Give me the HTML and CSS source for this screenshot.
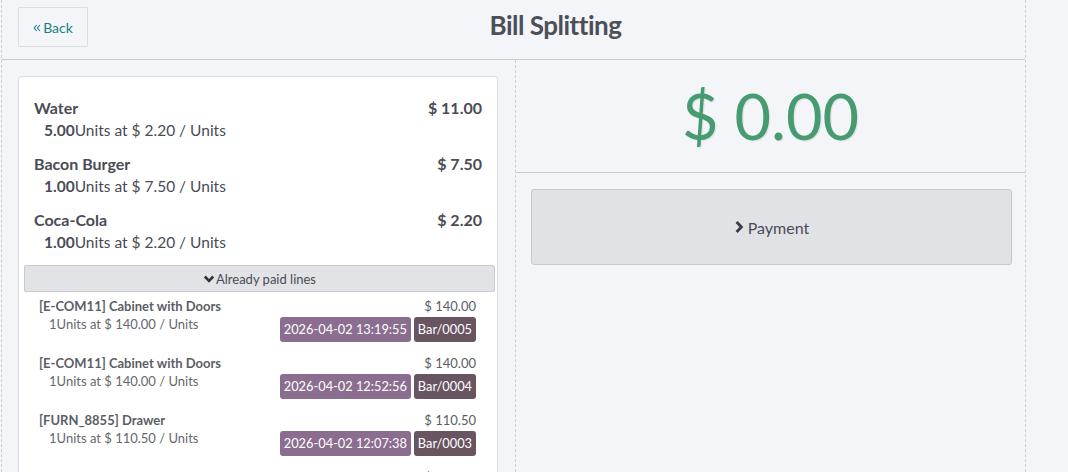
FILE: index.html
```html
<!DOCTYPE html>
<html>
<head>
<meta charset="utf-8">
<link rel="stylesheet" href="styles.css">
</head>
<body>
<div class="screen">
  <header class="topbar">
    <button class="back-btn">
      <svg class="back-icon" viewBox="0 0 10 10" width="8" height="8"><path d="M4.5 1.5 L1.5 5 L4.5 8.5 M8.5 1.5 L5.5 5 L8.5 8.5" fill="none" stroke="currentColor" stroke-width="1.3"/></svg>Back
    </button>
    <h1 class="title">Bill Splitting</h1>
  </header>
  <main class="content">
    <section class="left-col">
      <div class="card">
        <ul class="order-lines">
          <li class="line">
            <div class="line-head"><span>Water</span><span>$ 11.00</span></div>
            <div class="line-info"><b>5.00</b>Units at $ 2.20 / Units</div>
          </li>
          <li class="line">
            <div class="line-head"><span>Bacon Burger</span><span>$ 7.50</span></div>
            <div class="line-info"><b>1.00</b>Units at $ 7.50 / Units</div>
          </li>
          <li class="line">
            <div class="line-head"><span>Coca-Cola</span><span>$ 2.20</span></div>
            <div class="line-info"><b>1.00</b>Units at $ 2.20 / Units</div>
          </li>
        </ul>
        <div class="paid-toggle">
          <svg viewBox="0 0 12 10" width="12" height="10"><path d="M1.8 2.5 L6 6.8 L10.2 2.5" fill="none" stroke="#333" stroke-width="2.6"/></svg>Already paid lines
        </div>
        <ul class="paid-lines">
          <li class="paid">
            <div class="paid-left">
              <div class="paid-name">[E-COM11] Cabinet with Doors</div>
              <div class="paid-info">1Units at $ 140.00 / Units</div>
            </div>
            <div class="paid-right">
              <div class="paid-price">$ 140.00</div>
              <div class="badges"><span class="badge date">2026-04-02 13:19:55</span><span class="badge ref">Bar/0005</span></div>
            </div>
          </li>
          <li class="paid">
            <div class="paid-left">
              <div class="paid-name">[E-COM11] Cabinet with Doors</div>
              <div class="paid-info">1Units at $ 140.00 / Units</div>
            </div>
            <div class="paid-right">
              <div class="paid-price">$ 140.00</div>
              <div class="badges"><span class="badge date">2026-04-02 12:52:56</span><span class="badge ref">Bar/0004</span></div>
            </div>
          </li>
          <li class="paid">
            <div class="paid-left">
              <div class="paid-name">[FURN_8855] Drawer</div>
              <div class="paid-info">1Units at $ 110.50 / Units</div>
            </div>
            <div class="paid-right">
              <div class="paid-price">$ 110.50</div>
              <div class="badges"><span class="badge date">2026-04-02 12:07:38</span><span class="badge ref">Bar/0003</span></div>
            </div>
          </li>
          <li class="paid">
            <div class="paid-left"></div>
            <div class="paid-right">
              <div class="paid-price">$ 110.50</div>
            </div>
          </li>
        </ul>
      </div>
    </section>
    <section class="right-col">
      <div class="amount">$ 0.00</div>
      <div class="actions">
        <button class="pay-btn">
          <svg viewBox="0 0 10 14" width="10" height="14"><path d="M2.6 2 L7.4 7 L2.6 12" fill="none" stroke="#3a3c44" stroke-width="2.8"/></svg>Payment
        </button>
      </div>
    </section>
  </main>
</div>
</body>
</html>
```
FILE: styles.css
```css
* { box-sizing: border-box; }
html, body {
  margin: 0;
  padding: 0;
  height: 472px;
  overflow: hidden;
  background: #f4f5f9;
  font-family: Lato, "Noto Sans", sans-serif;
  color: #4a4a4a;
}
ul { list-style: none; margin: 0; padding: 0; }
.screen {
  margin-left: 1px;
  width: 1025px;
  height: 472px;
  overflow: hidden;
  border-left: 1px dashed #cfd0d4;
  border-right: 1px dashed #cfd0d4;
  display: flex;
  flex-direction: column;
}
.topbar {
  height: 60px;
  flex: none;
  border-bottom: 1px solid #c8c9ce;
  display: flex;
  align-items: flex-start;
  padding: 7px 0 0 16px;
}
.back-btn {
  width: 70px;
  height: 40px;
  border: 1px solid #dcdde2;
  background: #f4f5f9;
  color: #1b7f86;
  font-family: Lato, sans-serif;
  font-size: 14px;
  display: flex;
  align-items: center;
  justify-content: center;
  gap: 2px;
  padding: 0;
  border-radius: 1px;
}
.back-icon { margin-top: 1px; }
.title {
  flex: 1;
  margin: 0;
  text-align: center;
  font-size: 26px;
  font-weight: 700;
  color: #4b4f58;
  line-height: 36px;
  letter-spacing: -0.5px;
  padding-right: 2px;
}
.content {
  flex: 1;
  display: flex;
  min-height: 0;
}
.left-col {
  width: 514px;
  border-right: 1px dashed #cfd0d4;
  padding: 16px 17px 0 16px;
}
.card {
  background: #fff;
  border: 1px solid #dcdde2;
  border-radius: 3px;
  min-height: 420px;
  padding: 19px 2px 0 5px;
}
.order-lines { padding: 0 13px 0 10px; }
.line { margin-bottom: 10px; }
.line-head {
  display: flex;
  justify-content: space-between;
  font-size: 16px;
  font-weight: 700;
  line-height: 23px;
  color: #4a4c55;
}
.line-info {
  padding-left: 10px;
  font-size: 15.5px;
  line-height: 23px;
  color: #4a4c55;
}
.line-info b { font-weight: 700; }
.paid-toggle {
  margin-top: 11px;
  height: 27px;
  background: #e2e3e7;
  border: 1px solid #c9cace;
  border-radius: 2px;
  display: flex;
  align-items: center;
  justify-content: center;
  font-size: 13px;
  color: #4a4c55;
  gap: 1px;
}
.paid-lines { padding: 5px 19px 0 15px; }
.paid {
  display: flex;
  justify-content: space-between;
  margin-bottom: 12px;
}
.paid-name {
  font-size: 13px;
  font-weight: 700;
  line-height: 18px;
  color: #5c5e66;
}
.paid-info {
  font-size: 13px;
  line-height: 18px;
  padding-left: 10px;
  color: #65676e;
}
.paid-right {
  display: flex;
  flex-direction: column;
  align-items: flex-end;
}
.paid-price {
  font-size: 13px;
  line-height: 18px;
  color: #5c5e66;
}
.badges {
  margin-top: 2px;
  display: flex;
  gap: 3px;
}
.badge {
  height: 25px;
  line-height: 25px;
  padding: 0 4px;
  border-radius: 3px;
  color: #fff;
  font-size: 12.8px;
}
.badge.date { background: #8b6d8f; }
.badge.ref { background: #695462; }
.right-col {
  flex: 1;
  display: flex;
  flex-direction: column;
}
.amount {
  height: 113px;
  flex: none;
  border-bottom: 1px solid #c8c9ce;
  display: flex;
  align-items: center;
  justify-content: center;
  font-size: 63px;
  color: #469b71;
  text-shadow: 0 0 2px #fff, 1px 1px 1px rgba(0,0,0,0.12);
  padding-bottom: 2px;
}
.actions { padding: 16px 13px 0 15px; }
.pay-btn {
  width: 100%;
  height: 76px;
  background: #e1e2e6;
  border: 1px solid #c8c9cd;
  border-radius: 3px;
  display: flex;
  align-items: center;
  justify-content: center;
  gap: 4px;
  font-family: Lato, sans-serif;
  font-size: 16px;
  color: #4a4c55;
  padding-bottom: 1px;
}
```
